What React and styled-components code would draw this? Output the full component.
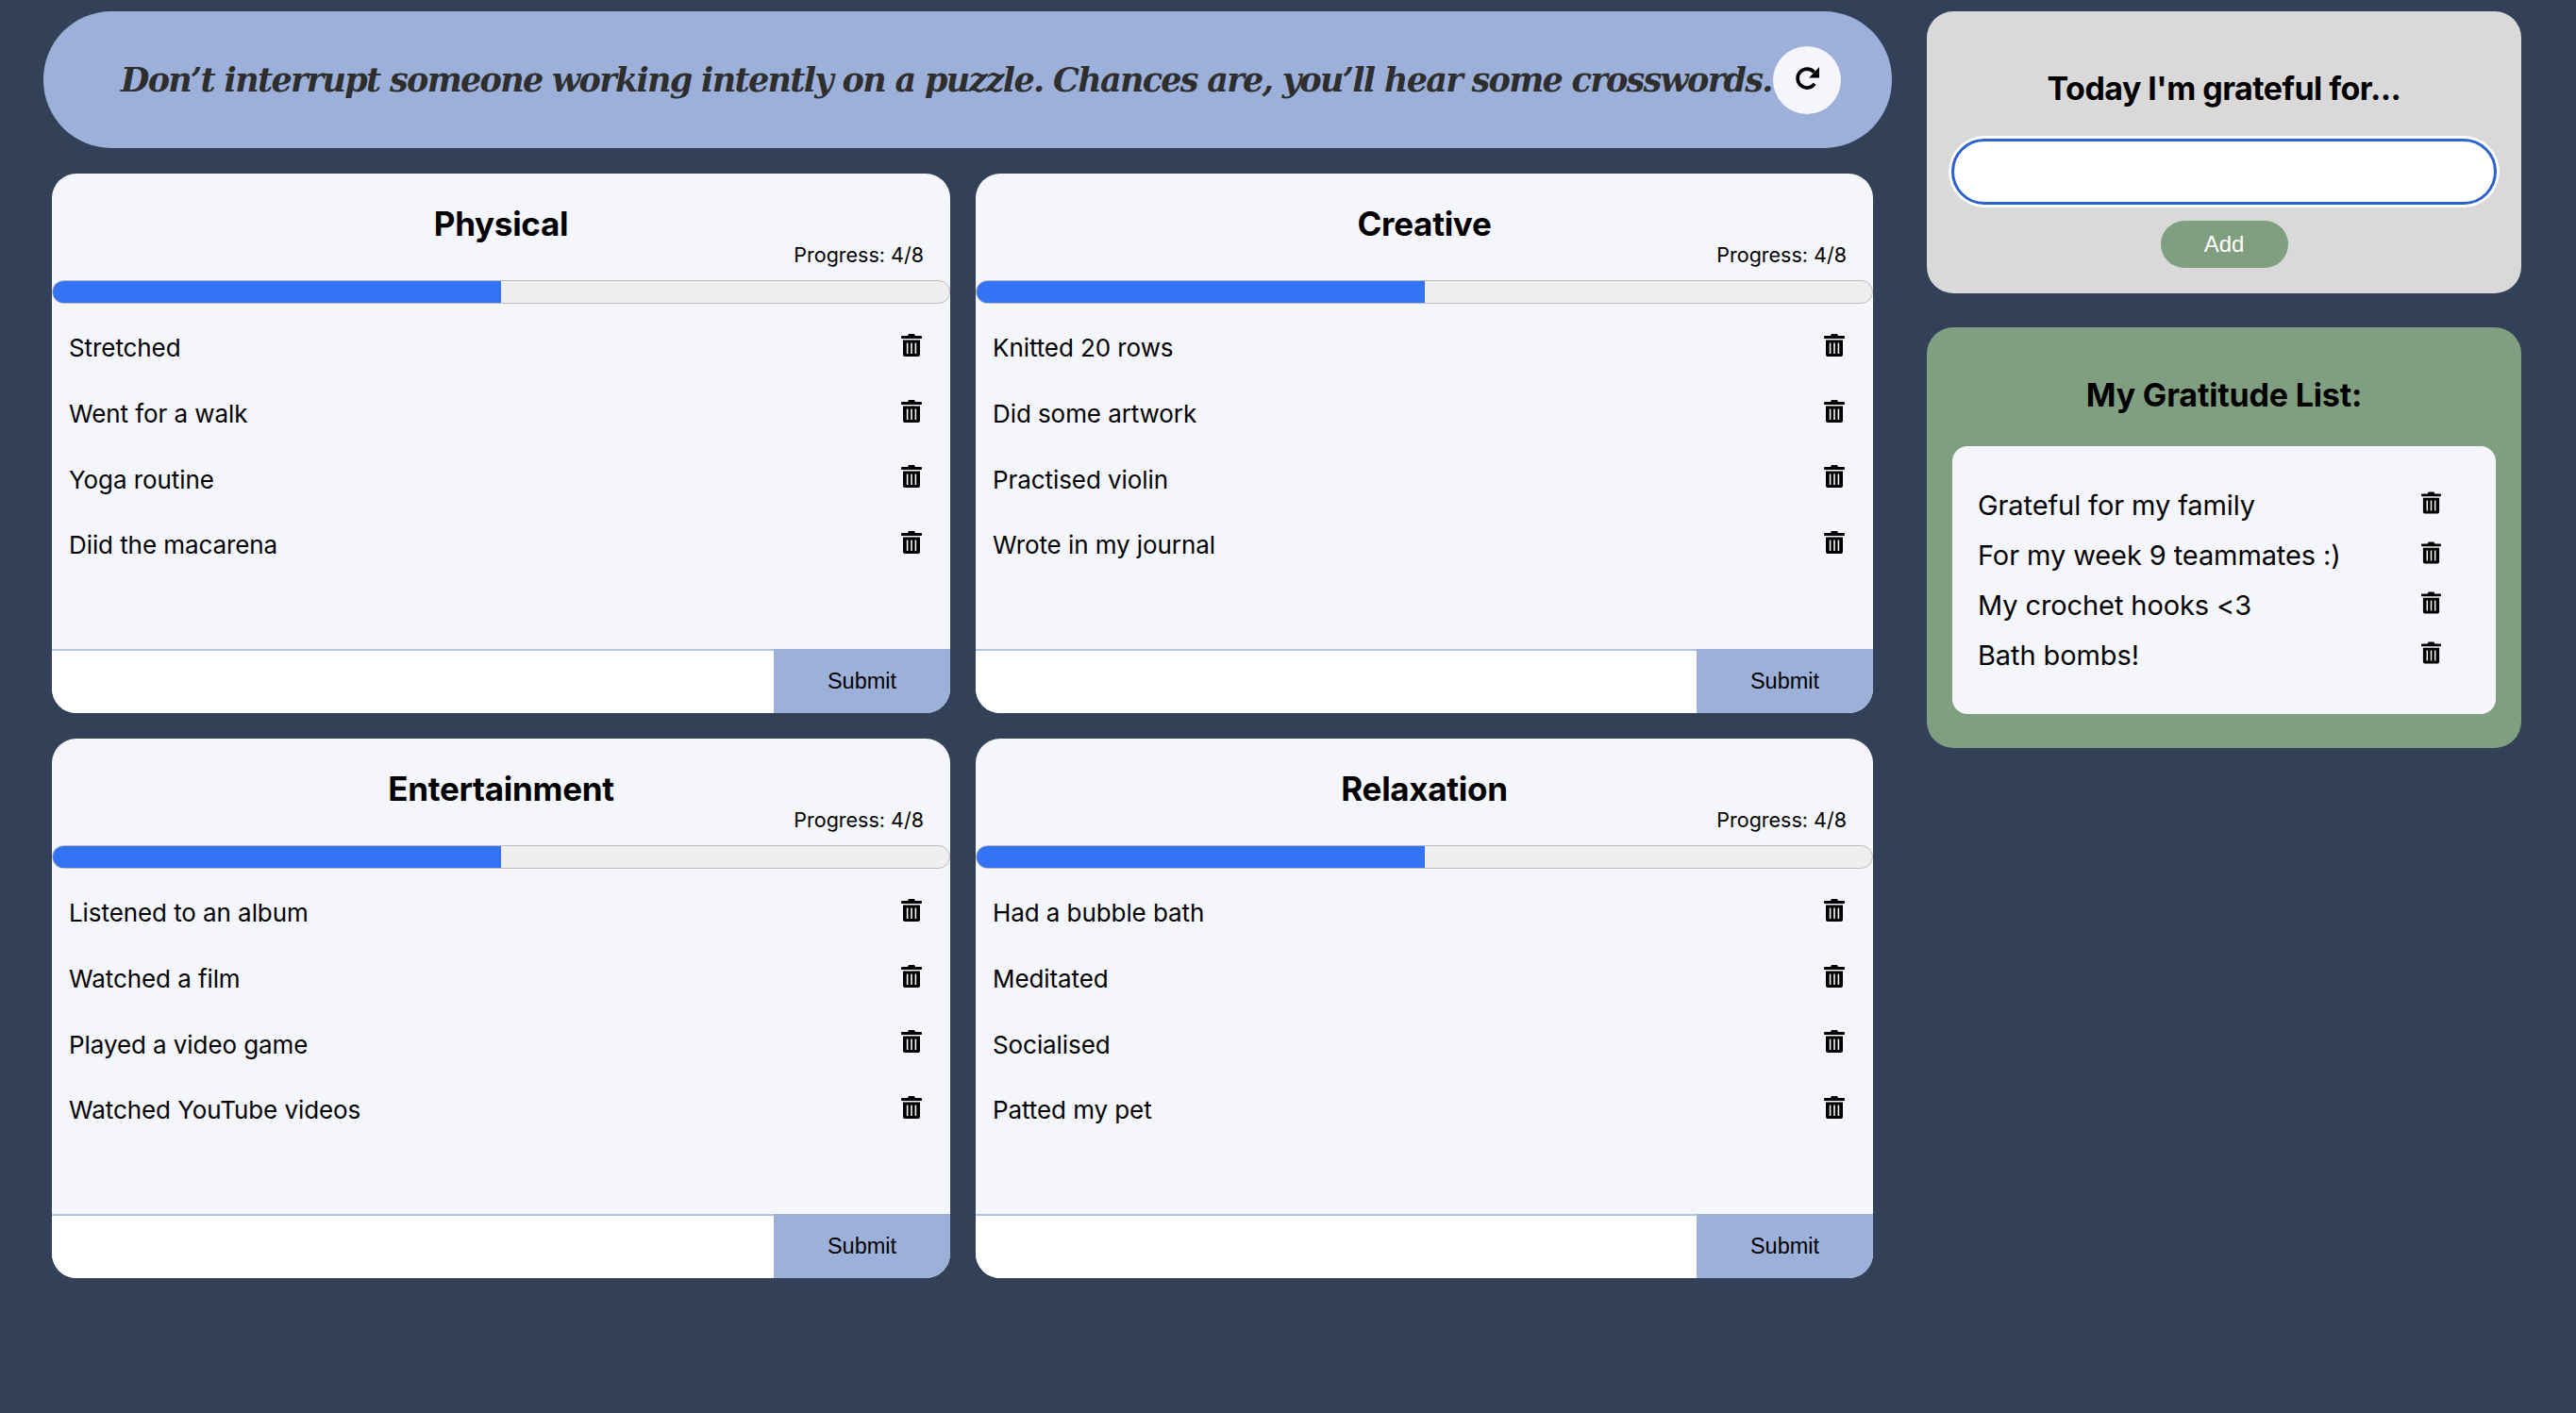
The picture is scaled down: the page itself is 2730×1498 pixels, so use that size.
import React from "react";
import styled, { createGlobalStyle } from "styled-components";

const Global = createGlobalStyle`
  html, body { margin: 0; padding: 0; background: #324158; min-height: 100%; }
  * { box-sizing: border-box; }
  body { font-family: Inter, "Liberation Sans", sans-serif; color: #000; }
`;

const Page = styled.div`
  display: flex;
  align-items: flex-start;
  gap: 37px;
  min-height: 1498px;
  padding: 12px 0 0 46px;
`;
const Main = styled.main`
  width: 1959px;
  display: flex;
  flex-direction: column;
  gap: 27px;
`;
const Banner = styled.header`
  height: 145px;
  border-radius: 72px;
  background: #9db0d9;
  display: flex;
  align-items: center;
  justify-content: space-between;
  padding: 0 54px 0 82px;
`;
const Quote = styled.p`
  margin: 0;
  font-family: "DejaVu Serif", "Liberation Serif", serif;
  font-style: italic;
  font-weight: 700;
  font-size: 35px;
  letter-spacing: -1.69px;
  color: #2e2e2e;
  white-space: nowrap;
`;
const RoundButton = styled.button`
  width: 72px;
  height: 72px;
  flex: none;
  border: 0;
  padding: 0;
  border-radius: 50%;
  background: #f5f5fc;
  display: flex;
  align-items: center;
  justify-content: center;
`;
const RedoMark = styled.span`
  display: flex;
  transform: translateY(-2px);
`;
const Grid = styled.div`
  display: grid;
  grid-template-columns: 952px 951px;
  grid-auto-rows: 572px;
  gap: 27px;
  margin: 0 0 0 9px;
`;
const Card = styled.section`
  background: #f5f5fc;
  border-radius: 26px;
  overflow: hidden;
  display: flex;
  flex-direction: column;
`;
const CardTitle = styled.h2`
  margin: 0;
  padding-top: 31px;
  font-size: 35px;
  letter-spacing: -0.3px;
  line-height: 44px;
  font-weight: 700;
  text-align: center;
`;
const ProgressLabel = styled.div`
  margin-top: -2px;
  padding-right: 28px;
  font-size: 21.5px;
  line-height: 26px;
  text-align: right;
`;
const Track = styled.div`
  height: 25px;
  margin-top: 14px;
  border: 1.5px solid #bcbcbc;
  border-radius: 13px;
  background: #efefef;
  overflow: hidden;
`;
const Fill = styled.div`
  height: 100%;
  background: #3373f4;
`;
const Tasks = styled.ul`
  list-style: none;
  margin: 12px 0 0;
  padding: 0 30px 0 18px;
`;
const Task = styled.li`
  height: 69.7px;
  display: flex;
  align-items: center;
  justify-content: space-between;
  font-size: 26px;
  letter-spacing: -0.08px;
`;
const IconButton = styled.span`
  display: flex;
  transform: translateY(-3px);
`;
const Form = styled.form`
  margin-top: auto;
  height: 68px;
  display: flex;
  border-top: 2px solid #b4c4e4;
`;
const TaskInput = styled.input`
  flex: 1;
  min-width: 0;
  border: 0;
  background: #fff;
`;
const Submit = styled.button`
  width: 187px;
  margin-top: -2px;
  border: 0;
  background: #9db0d9;
  color: #000;
  font-family: "Liberation Sans", Arial, sans-serif;
  font-size: 23.5px;
`;
const Side = styled.aside`
  width: 630px;
  display: flex;
  flex-direction: column;
  gap: 36px;
`;
const AddPanel = styled.section`
  height: 299px;
  border-radius: 28px;
  background: #d9d9d9;
  padding: 61px 26px 0;
  display: flex;
  flex-direction: column;
  align-items: center;
`;
const PanelTitle = styled.h2`
  margin: 0;
  font-size: 34px;
  letter-spacing: ${(p) => p.$tracking};
  line-height: 42px;
  font-weight: 700;
  text-align: center;
`;
const GratitudeInput = styled.input`
  width: 100%;
  height: 70px;
  margin: 32px 0 0;
  border: 3px solid #2b63ce;
  border-radius: 35px;
  background: #fff;
  box-shadow: 0 0 0 3px #fff;
`;
const Add = styled.button`
  width: 135px;
  height: 50px;
  margin-top: 17px;
  border: 0;
  border-radius: 25px;
  background: #809f80;
  color: #fff;
  font-family: "Liberation Sans", Arial, sans-serif;
  font-size: 24px;
`;
const ListPanel = styled.section`
  height: 446px;
  border-radius: 28px;
  background: #809f80;
  padding: 51px 27px 0;
`;
const ListBox = styled.ul`
  list-style: none;
  margin: 33px 0 0;
  height: 284px;
  border-radius: 16px;
  background: #f5f5fc;
  padding: 36px 58px 0 27px;
`;
const ListItem = styled.li`
  height: 53px;
  display: flex;
  align-items: center;
  justify-content: space-between;
  font-size: 29px;
  letter-spacing: -0.1px;
`;

const Trash = ({ w = 22, h = 24 }) => (
  <svg width={w} height={h} viewBox="0 0 22 24" fill="#000" aria-hidden="true">
    <path d="M8 0h6l1 2h6a1 1 0 0 1 1 1v1a1 1 0 0 1-1 1H1a1 1 0 0 1-1-1V3a1 1 0 0 1 1-1h6z" />
    <path
      fillRule="evenodd"
      d="M2 6.5h18V22a2 2 0 0 1-2 2H4a2 2 0 0 1-2-2zM5.8 9.5v11.5h1.6V9.5zM10.2 9.5v11.5h1.6V9.5zM14.6 9.5v11.5h1.6V9.5z"
    />
  </svg>
);

const Redo = () => (
  <svg width="26" height="26" viewBox="0 0 24 24" aria-hidden="true">
    <path d="M19.5 17.5A9.2 9.2 0 1 1 19 6" fill="none" stroke="#000" strokeWidth="3.4" />
    <path d="M14 11.5h10V1z" fill="#000" />
  </svg>
);

const categories = [
  { name: "Physical", tasks: ["Stretched", "Went for a walk", "Yoga routine", "Diid the macarena"] },
  { name: "Creative", tasks: ["Knitted 20 rows", "Did some artwork", "Practised violin", "Wrote in my journal"] },
  { name: "Entertainment", tasks: ["Listened to an album", "Watched a film", "Played a video game", "Watched YouTube videos"] },
  { name: "Relaxation", tasks: ["Had a bubble bath", "Meditated", "Socialised", "Patted my pet"] },
];
const gratitude = ["Grateful for my family", "For my week 9 teammates :)", "My crochet hooks <3", "Bath bombs!"];

export default function App() {
  return (
    <>
      <Global />
      <Page>
        <Main>
          <Banner>
            <Quote>Don’t interrupt someone working intently on a puzzle. Chances are, you’ll hear some crosswords.</Quote>
            <RoundButton type="button" aria-label="New quote"><RedoMark><Redo /></RedoMark></RoundButton>
          </Banner>
          <Grid>
            {categories.map((c) => (
              <Card key={c.name}>
                <CardTitle>{c.name}</CardTitle>
                <ProgressLabel>Progress: 4/8</ProgressLabel>
                <Track><Fill style={{ width: `${(4 / 8) * 100}%` }} /></Track>
                <Tasks>
                  {c.tasks.map((t) => (
                    <Task key={t}>{t}<IconButton><Trash /></IconButton></Task>
                  ))}
                </Tasks>
                <Form onSubmit={(e) => e.preventDefault()}>
                  <TaskInput aria-label={`New ${c.name} task`} />
                  <Submit type="submit">Submit</Submit>
                </Form>
              </Card>
            ))}
          </Grid>
        </Main>
        <Side>
          <AddPanel>
            <PanelTitle $tracking="-0.55px">Today I'm grateful for...</PanelTitle>
            <GratitudeInput aria-label="Gratitude" />
            <Add type="button">Add</Add>
          </AddPanel>
          <ListPanel>
            <PanelTitle $tracking="-0.17px">My Gratitude List:</PanelTitle>
            <ListBox>
              {gratitude.map((g) => (
                <ListItem key={g}>{g}<IconButton><Trash w={21} h={24} /></IconButton></ListItem>
              ))}
            </ListBox>
          </ListPanel>
        </Side>
      </Page>
    </>
  );
}
